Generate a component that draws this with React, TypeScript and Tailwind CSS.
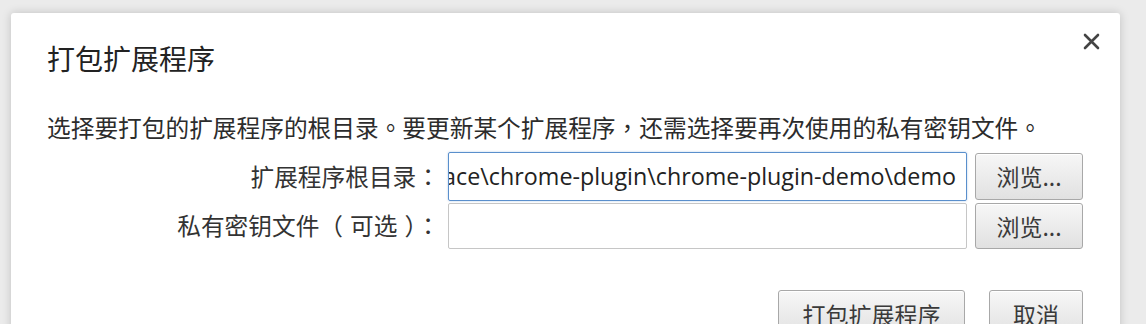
import React from 'react';

const cjk = "font-['Noto_Sans_CJK_SC','Noto_Sans',sans-serif]";
const latin = "font-['Open_Sans','Noto_Sans_CJK_SC',sans-serif]";
// centred full-width punctuation, as the reference draws it
const P = ({ c, className = '' }: { c: string; className?: string }) => (
  <span className={`font-['Noto_Sans_CJK_TC','Noto_Sans_CJK_SC',sans-serif] ${className}`}>{c}</span>
);

const Btn = ({ children, className = '' }: { children: React.ReactNode; className?: string }) => (
  <button
    className={`flex items-center justify-center rounded-[3px] border border-[#a8a8a8] bg-gradient-to-b from-[#f7f7f7] to-[#e1e1e1] text-[23px] text-[#3a3a3a] shadow-[inset_0_1px_0_#fff] ${cjk} ${className}`}
  >
    {children}
  </button>
);

export default function App() {
  return (
    <div className="h-[324px] w-[1146px] overflow-hidden bg-[#ebebeb] pl-[11px] pt-[13px]">
      <div className="relative h-[340px] w-[1109px] rounded-[3px] bg-white shadow-[0_0_10px_rgba(0,0,0,0.18)]">
        {/* close */}
        <button className="absolute left-[1072px] top-[20px] flex h-[17px] w-[17px] items-center justify-center">
          <svg width="17" height="17" viewBox="0 0 17 17">
            <path d="M2 2 L15 15 M15 2 L2 15" stroke="#444" strokeWidth="2.6" strokeLinecap="round" />
          </svg>
        </button>

        <div className="pl-[36px] pr-[37px] pt-[27px]">
          <h1 className={`text-[28px] leading-[36px] text-[#222] ${cjk}`}>打包扩展程序</h1>

          <p className={`mt-[35px] text-[23.7px] leading-[32px] text-[#2c2c2c] ${cjk}`}>
            选择要打包的扩展程序的根目录<P c="。" />要更新某个扩展程序<P c="，" />还需选择要再次使用的私有密钥文件<P c="。" />
          </p>

          <div className="mt-[9px] grid grid-cols-[393px_519px_108px] items-center gap-x-[8px] gap-y-[2px]">
            <label className={`text-right text-[23.7px] text-[#333] ${cjk}`}>
              扩展程序根目录<P c="：" />
            </label>
            <div className="flex h-[49px] items-center justify-end overflow-hidden whitespace-nowrap rounded-[2px] border-[1.5px] border-[#5a8fcc] pr-[10px] shadow-[0_0_2px_rgba(90,143,204,0.5)]">
              <span className={`text-[23.3px] text-[#222] ${latin}`}>D:\workspace\chrome-plugin\chrome-plugin-demo\demo</span>
            </div>
            <Btn className="h-[47px]">浏览...</Btn>

            <label className={`text-right text-[23.7px] text-[#333] ${cjk}`}>
              私有密钥文件<P c="（" className="mr-[7px]" />可选<P c="）" className="ml-[7px]" /><P c="：" />
            </label>
            <div className="h-[46px] rounded-[2px] border border-[#c6c6c6]" />
            <Btn className="h-[46px]">浏览...</Btn>
          </div>

          <div className="mt-[41px] flex justify-end gap-[24px]">
            <Btn className="h-[48px] w-[187px]">打包扩展程序</Btn>
            <Btn className="h-[48px] w-[94px]">取消</Btn>
          </div>
        </div>
      </div>
    </div>
  );
}
